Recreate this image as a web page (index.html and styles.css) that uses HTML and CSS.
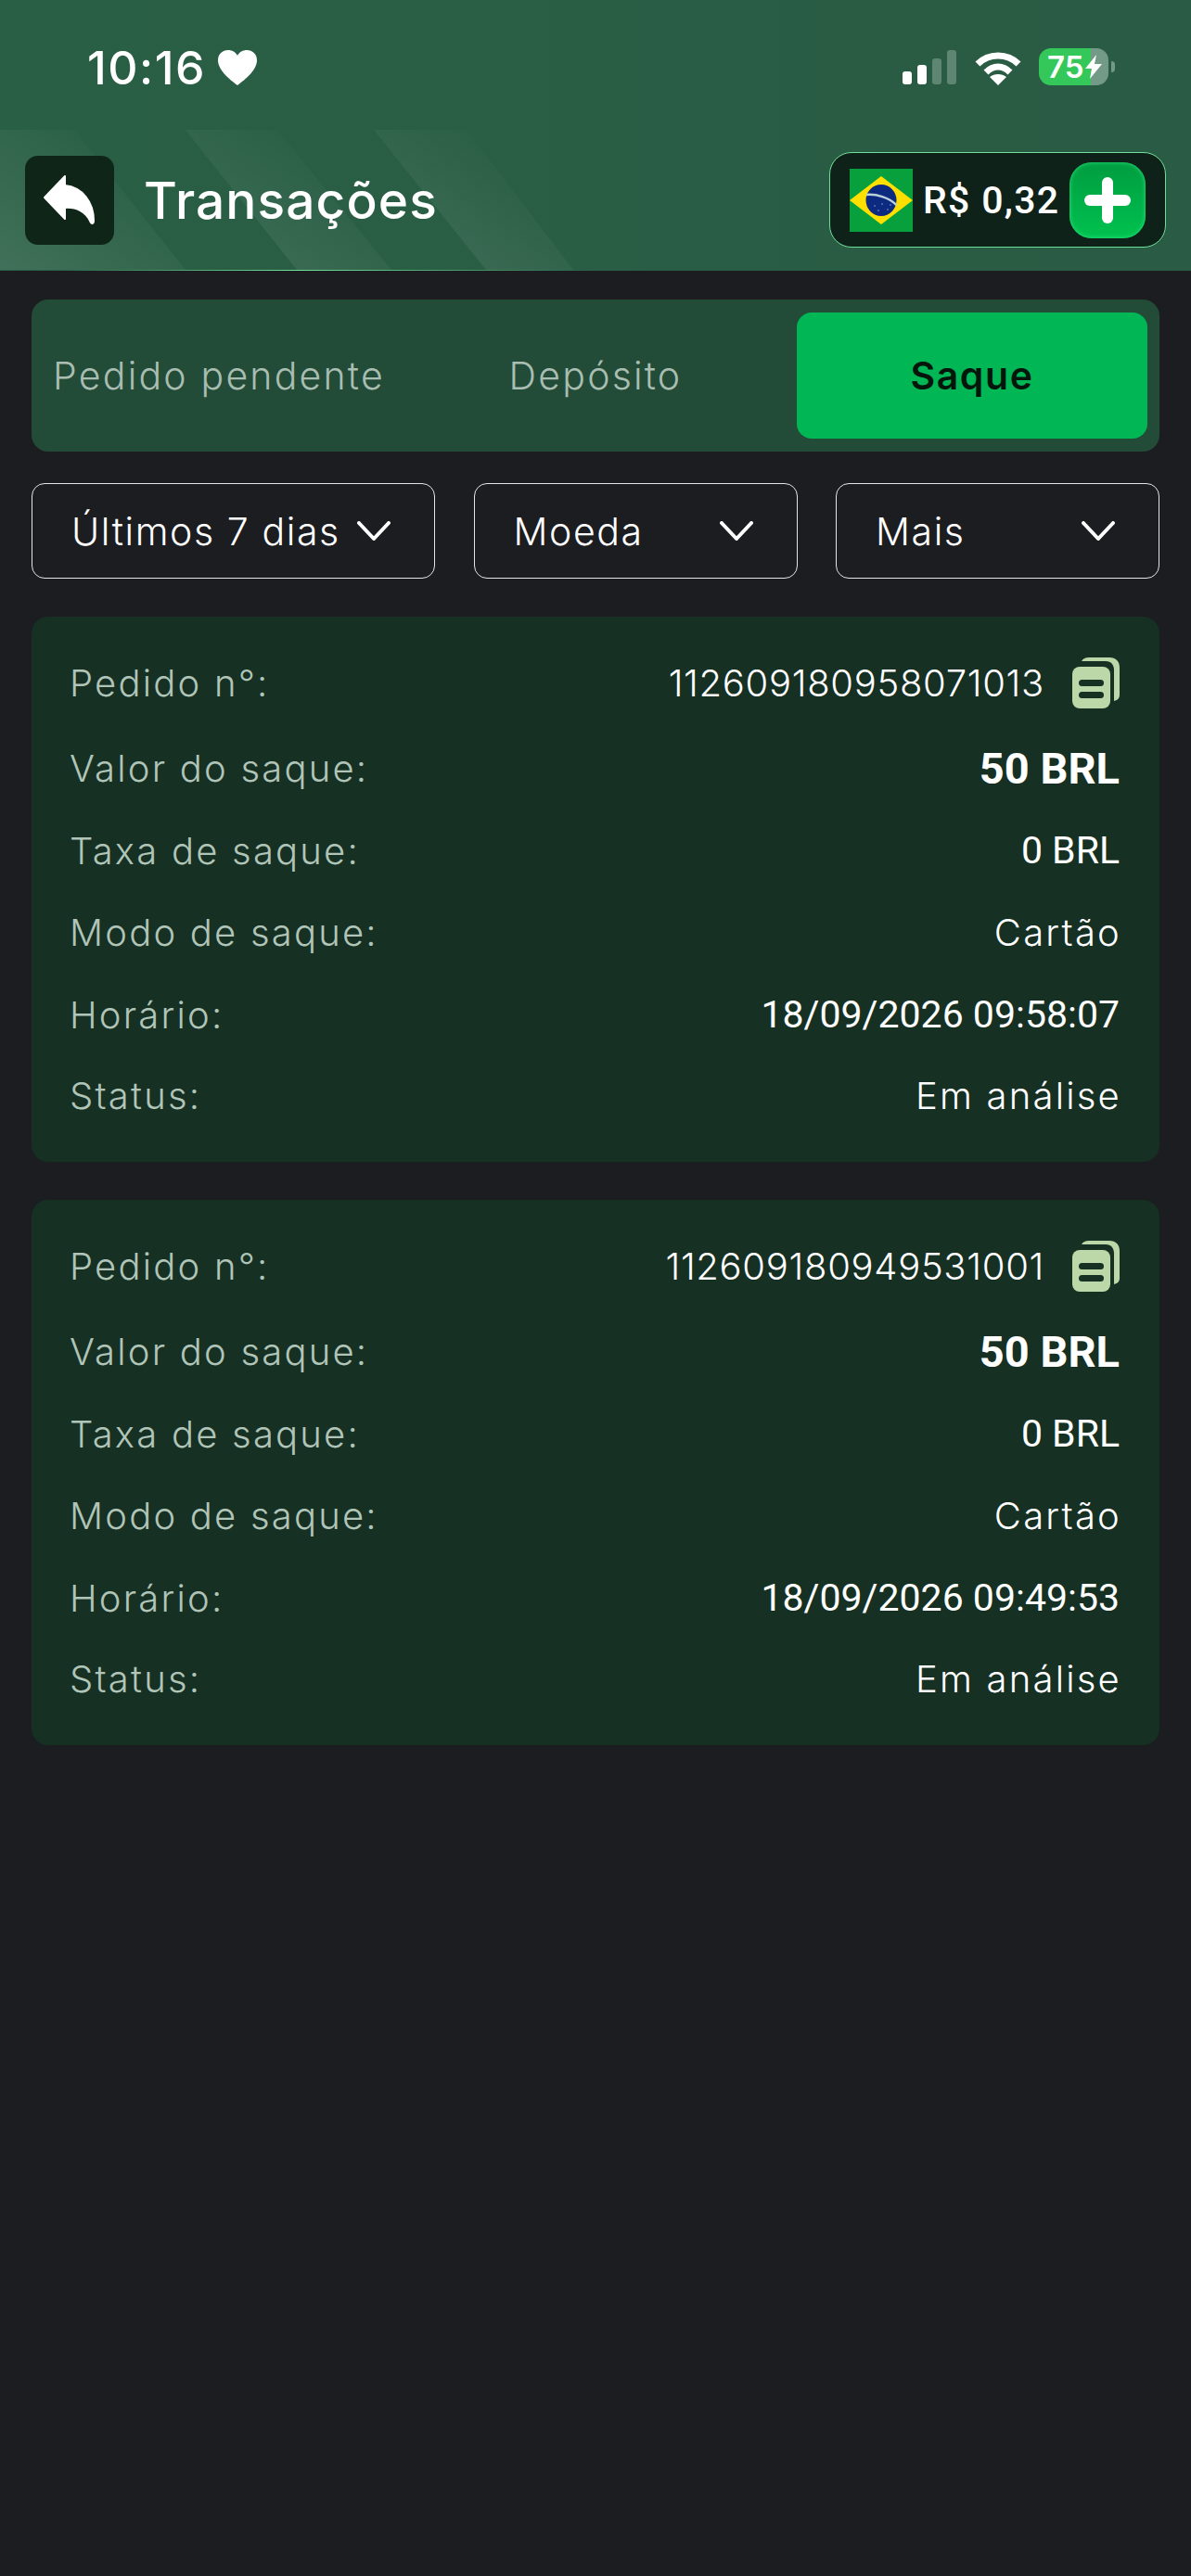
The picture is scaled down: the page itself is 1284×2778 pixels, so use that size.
FILE: index.html
```html
<!DOCTYPE html>
<html lang="pt-BR">
<head>
  <meta charset="UTF-8" />
  <meta name="viewport" content="width=device-width, initial-scale=1.0"/>
  <title>Transações</title>
  <link rel="stylesheet" href="styles.css">
</head>
<body>

  <header class="top">
    <div class="status-bar">
      <div class="clock">
        <span>10:16</span>
        <svg class="heart" viewBox="0 0 42 38"><path d="M21 38C16 34 0 23 0 11C0 4 5 0 11 0C15 0 19 2 21 6C23 2 27 0 31 0C37 0 42 4 42 11C42 23 26 34 21 38Z"/></svg>
      </div>
      <div class="status-icons">
        <div class="signal">
          <i class="bar b1"></i><i class="bar b2"></i><i class="bar b3 off"></i><i class="bar b4 off"></i>
        </div>
        <svg class="wifi" viewBox="0 0 50 37">
          <path d="M3 14C15 2 35 2 47 14" fill="none" stroke="#fff" stroke-width="7"/>
          <path d="M12 23C20 15 30 15 38 23" fill="none" stroke="#fff" stroke-width="7"/>
          <path d="M25 37L16 28C21 24 29 24 34 28Z" fill="#fff"/>
        </svg>
        <div class="battery">
          <span>75</span>
          <svg class="bolt" viewBox="0 0 18 26"><path d="M12 0L0 15H7L5 26L18 10H10Z"/></svg>
        </div>
        <i class="battery-cap"></i>
      </div>
    </div>

    <div class="nav">
      <svg class="stripes" viewBox="0 0 700 152" preserveAspectRatio="none">
        <defs>
          <linearGradient id="fade" x1="0" y1="1" x2="1" y2="0">
            <stop offset="0" stop-color="#fff" stop-opacity="0.11"/>
            <stop offset="0.7" stop-color="#fff" stop-opacity="0.015"/>
            <stop offset="1" stop-color="#fff" stop-opacity="0"/>
          </linearGradient>
        </defs>
        <polygon points="0,0 80,0 200,152 0,152" fill="url(#fade)"/>
        <polygon points="200,0 299,0 422,152 320,152" fill="url(#fade)"/>
        <polygon points="403,0 503,0 618,152 524,152" fill="url(#fade)"/>
      </svg>
      <button class="back-btn">
        <svg viewBox="0 0 96 96"><path d="M43 22L21 45L43 68V56C55 55 66 60 71 72C73 74 74 72 74 70C74 50 62 34 43 32Z"/></svg>
      </button>
      <h1 class="title">Transações</h1>
      <div class="balance">
        <svg class="flag" viewBox="0 0 68 68">
          <rect width="68" height="68" fill="#07a03c"/>
          <polygon points="34,8 68,34 34,60 0,34" fill="#fedf00"/>
          <ellipse cx="34" cy="34" rx="16.5" ry="17" fill="#0b2a80"/>
          <path d="M18 28C29 27 42 31 50.500 39" fill="none" stroke="#b9d0d8" stroke-width="2.500"/>
          <g fill="#8fa8d0"><circle cx="27" cy="40" r="0.800"/><circle cx="35" cy="38" r="0.800"/><circle cx="41" cy="44" r="0.800"/><circle cx="31" cy="45" r="0.800"/><circle cx="44" cy="39" r="0.800"/></g>
        </svg>
        <span class="amount">R$ 0,32</span>
        <button class="add-btn"><i class="plus-h"></i><i class="plus-v"></i></button>
      </div>
    </div>
  </header>

  <main class="content">
    <div class="tabs">
      <div class="tab">Pedido pendente</div>
      <div class="tab">Depósito</div>
      <div class="tab active">Saque</div>
    </div>

    <div class="filters">
      <div class="filter f-date">
        <span>Últimos 7 dias</span>
        <svg class="chevron" viewBox="0 0 36 22"><polyline points="2,2 18,19 34,2"/></svg>
      </div>
      <div class="filter f-coin">
        <span>Moeda</span>
        <svg class="chevron" viewBox="0 0 36 22"><polyline points="2,2 18,19 34,2"/></svg>
      </div>
      <div class="filter f-more">
        <span>Mais</span>
        <svg class="chevron" viewBox="0 0 36 22"><polyline points="2,2 18,19 34,2"/></svg>
      </div>
    </div>

    <section class="card">
      <div class="row"><span class="label">Pedido n°:</span>
        <span class="value order">112609180958071013
          <svg class="copy" viewBox="0 0 51 55"><path d="M10 4C12 1 14 0 18 0H40C47 0 51 4 51 11V40C51 44 49 46 45 47V14C45 8 42 4 36 4Z"/><rect y="10" width="41" height="45" rx="8"/><rect class="slot" x="7" y="24" width="27" height="7" rx="3.5"/><rect class="slot" x="7" y="37" width="27" height="7" rx="3.5"/></svg>
        </span>
      </div>
      <div class="row"><span class="label">Valor do saque:</span><span class="value num big">50 BRL</span></div>
      <div class="row"><span class="label">Taxa de saque:</span><span class="value num">0 BRL</span></div>
      <div class="row"><span class="label">Modo de saque:</span><span class="value">Cartão</span></div>
      <div class="row"><span class="label">Horário:</span><span class="value num">18/09/2026 09:58:07</span></div>
      <div class="row"><span class="label">Status:</span><span class="value">Em análise</span></div>
    </section>

    <section class="card">
      <div class="row"><span class="label">Pedido n°:</span>
        <span class="value order">112609180949531001
          <svg class="copy" viewBox="0 0 51 55"><path d="M10 4C12 1 14 0 18 0H40C47 0 51 4 51 11V40C51 44 49 46 45 47V14C45 8 42 4 36 4Z"/><rect y="10" width="41" height="45" rx="8"/><rect class="slot" x="7" y="24" width="27" height="7" rx="3.5"/><rect class="slot" x="7" y="37" width="27" height="7" rx="3.5"/></svg>
        </span>
      </div>
      <div class="row"><span class="label">Valor do saque:</span><span class="value num big">50 BRL</span></div>
      <div class="row"><span class="label">Taxa de saque:</span><span class="value num">0 BRL</span></div>
      <div class="row"><span class="label">Modo de saque:</span><span class="value">Cartão</span></div>
      <div class="row"><span class="label">Horário:</span><span class="value num">18/09/2026 09:49:53</span></div>
      <div class="row"><span class="label">Status:</span><span class="value">Em análise</span></div>
    </section>
  </main>

</body>
</html>
```

FILE: styles.css
```css
* {
  box-sizing: border-box;
}
body {
  margin: 0;
  min-height: 2778px;
  background: #1c1d21;
  color: #fff;
  font-family: Inter, sans-serif;
}

/* header */
.top {
  height: 292px;
  background: linear-gradient(90deg, #295f45, #2a5b44);
  border-bottom: 1px solid;
  border-image: linear-gradient(90deg, transparent 5%, #6fe09a 25%, transparent 50%) 1;
}
.status-bar {
  height: 140px;
  display: flex;
  justify-content: space-between;
  padding: 52px 82px 0 94px;
}
.clock {
  display: flex;
  align-items: flex-start;
  gap: 13px;
  height: 42px;
  font-size: 50px;
  font-weight: 500;
  line-height: 42px;
  letter-spacing: 1.5px;
}
.heart {
  width: 42px;
  height: 38px;
  margin-top: 2px;
  fill: #fff;
}
.status-icons {
  display: flex;
  align-items: flex-start;
}
.signal {
  display: flex;
  align-items: flex-end;
  gap: 6px;
  height: 37px;
  margin-top: 2px;
}
.bar {
  width: 10px;
  background: #fff;
  border-radius: 3px;
}
.bar.off {
  background: rgba(255, 255, 255, .25);
}
.b1 { height: 14px; }
.b2 { height: 21px; }
.b3 { height: 28px; }
.b4 { height: 37px; }
.wifi {
  width: 50px;
  height: 37px;
  margin: 3px 0 0 20px;
}
.battery {
  width: 75px;
  height: 40px;
  margin-left: 19px;
  padding-left: 9px;
  display: flex;
  align-items: center;
  border-radius: 13px;
  background: linear-gradient(90deg, #34c759 75%, #739a87 75%);
  font-size: 33px;
  font-weight: 600;
}
.bolt {
  width: 18px;
  height: 26px;
  margin-left: 2px;
  fill: #fff;
}
.battery-cap {
  width: 4px;
  height: 12px;
  margin: 14px 0 0 3px;
  background: #739a87;
  border-radius: 0 6px 6px 0;
}

.nav {
  position: relative;
  height: 151px;
  display: flex;
  align-items: center;
  padding: 0 27px;
}
.stripes {
  position: absolute;
  left: 0;
  top: 0;
  width: 700px;
  height: 151px;
}
.back-btn {
  position: relative;
  width: 96px;
  height: 96px;
  padding: 0;
  border: none;
  border-radius: 14px;
  background: #0f2518;
}
.back-btn svg {
  display: block;
  fill: #fff;
  stroke: #fff;
  stroke-width: 2;
  stroke-linejoin: round;
}
.title {
  position: relative;
  margin: 0 0 0 32px;
  font-size: 55px;
  font-weight: 500;
  letter-spacing: 1.1px;
}
.balance {
  position: relative;
  margin-left: auto;
  width: 363px;
  height: 103px;
  display: flex;
  align-items: center;
  padding: 0 21px;
  background: #0f2219;
  border: 1.5px solid #6fe09a;
  border-radius: 24px;
}
.flag {
  width: 68px;
  height: 68px;
  flex: none;
}
.amount {
  margin-left: 11px;
  font-family: Roboto, sans-serif;
  font-size: 41px;
  font-weight: 500;
  letter-spacing: 1.3px;
  white-space: nowrap;
}
.add-btn {
  position: relative;
  width: 82px;
  height: 82px;
  margin-left: auto;
  border: none;
  border-radius: 24px;
  background: linear-gradient(#009c3f, #00c250);
  box-shadow: inset 0 0 5px #2ae57d;
}
.plus-h, .plus-v {
  position: absolute;
  background: #fff;
  border-radius: 6px;
}
.plus-h {
  left: 16px;
  top: 35px;
  width: 50px;
  height: 12px;
}
.plus-v {
  left: 35px;
  top: 16px;
  width: 12px;
  height: 50px;
}

/* tabs + filters */
.content {
  padding: 31px 34px 0;
}
.tabs {
  height: 164px;
  display: grid;
  grid-template-columns: repeat(3, 378px);
  gap: 28px;
  padding: 14px 13px;
  background: #224c37;
  border-radius: 18px;
}
.tab {
  display: flex;
  align-items: center;
  justify-content: center;
  color: #a9bdb2;
  font-size: 41px;
  font-weight: 300;
  letter-spacing: 2.2px;
  white-space: nowrap;
}
.tab.active {
  background: #00b655;
  border-radius: 16px;
  color: #04160c;
  font-weight: 600;
  letter-spacing: 1.6px;
}
.filters {
  display: flex;
  justify-content: space-between;
  margin-top: 34px;
}
.filter {
  height: 103px;
  display: flex;
  align-items: center;
  justify-content: space-between;
  padding: 0 47px 0 42px;
  border: 1.5px solid #e4e6e6;
  border-radius: 14px;
  font-size: 41px;
  font-weight: 300;
  letter-spacing: 1.6px;
}
.f-date { width: 435px; }
.f-coin { width: 349px; }
.f-more { width: 349px; }
.chevron {
  width: 36px;
  height: 22px;
  fill: none;
  stroke: #fff;
  stroke-width: 4;
  stroke-linecap: round;
  stroke-linejoin: round;
}

/* cards */
.card {
  height: 588px;
  margin-top: 41px;
  padding: 44px 43px 0 41px;
  display: grid;
  grid-template-rows: 55px 52px 50px 50px 52px 46px;
  row-gap: 38px;
  background: #163023;
  border-radius: 18px;
}
.row {
  display: flex;
  align-items: center;
  justify-content: space-between;
  font-size: 40px;
  font-weight: 300;
  letter-spacing: 2.2px;
}
.label {
  color: #b0c4b8;
}
.value {
  margin-right: -2px;
  white-space: nowrap;
}
.order {
  display: flex;
  align-items: center;
  gap: 30px;
  margin-right: 0;
  letter-spacing: .7px;
}
.copy {
  width: 51px;
  height: 55px;
  fill: #bcd8a8;
}
.slot {
  fill: #163023;
}
.num {
  margin-right: 0;
  font-family: Roboto, sans-serif;
  font-size: 41px;
  font-weight: 400;
  letter-spacing: 0;
}
.big {
  font-size: 47px;
  font-weight: 700;
}
```
